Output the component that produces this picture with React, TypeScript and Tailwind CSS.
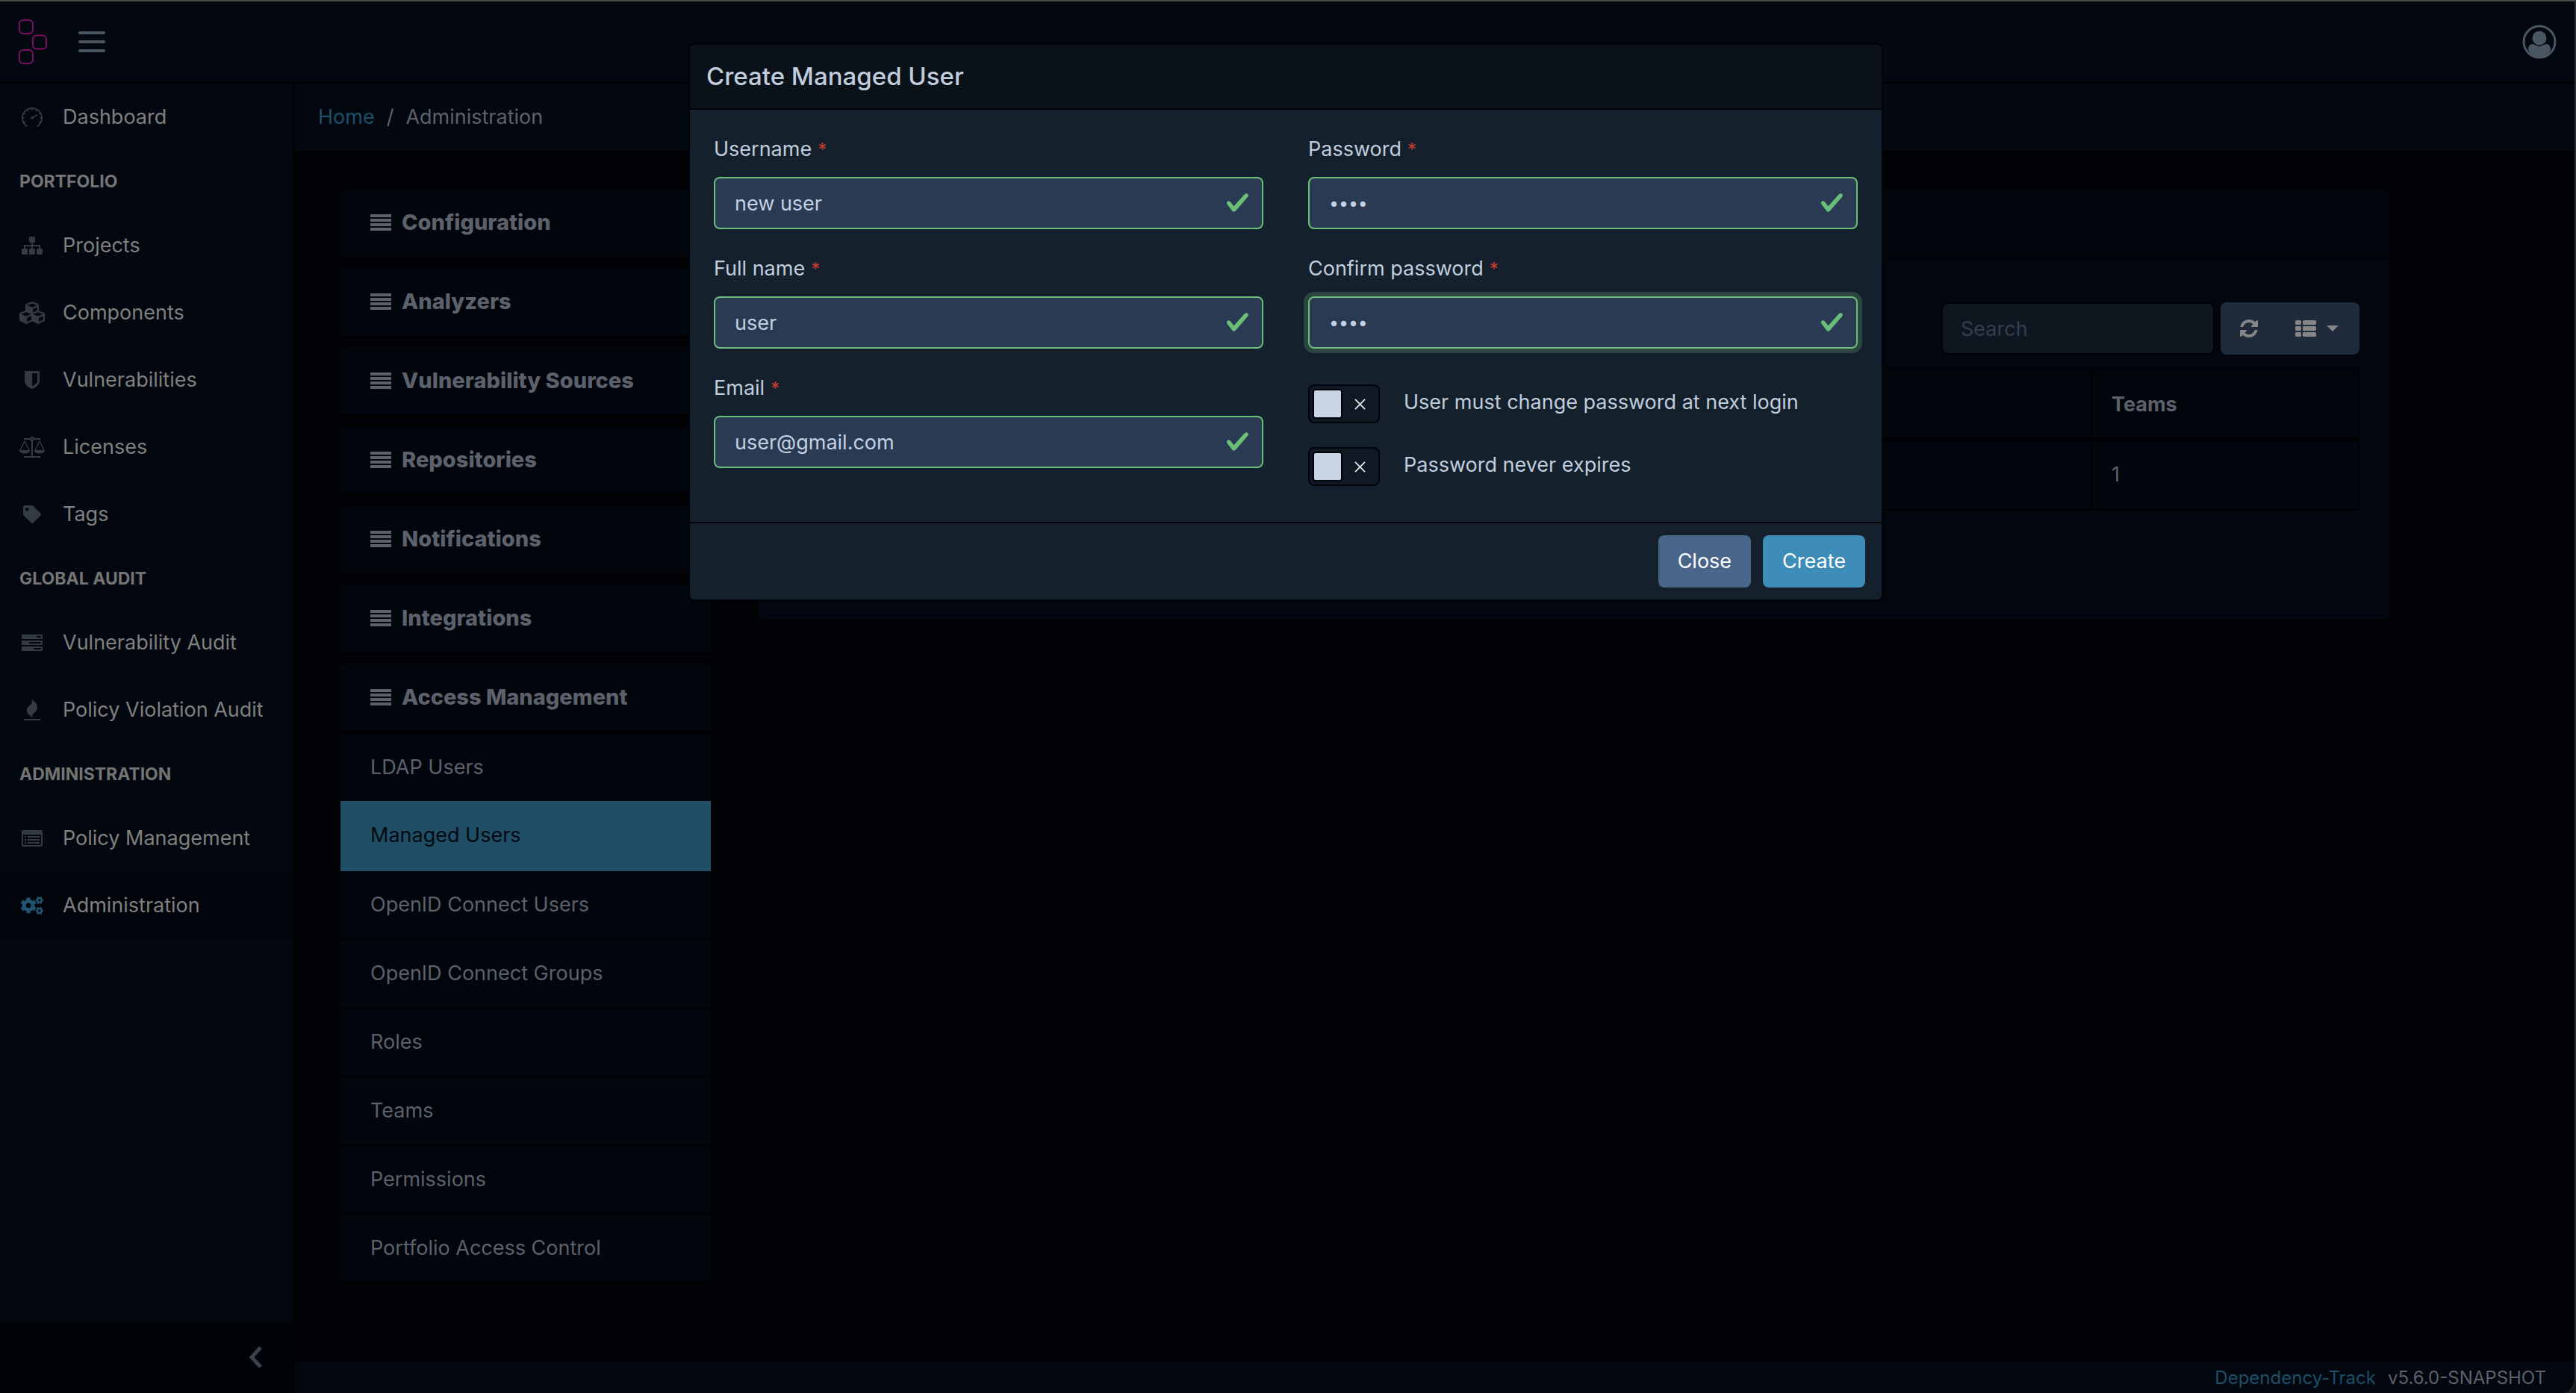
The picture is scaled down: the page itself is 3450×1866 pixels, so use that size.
import React from 'react';
import clsx from 'clsx';
import { FaCogs, FaCubes, FaTag } from 'react-icons/fa';
import { SlSpeedometer } from 'react-icons/sl';

const LogoIcon = () => (
  <svg width="40" height="62" viewBox="0 0 40 62" fill="none" stroke="#7d0f63" strokeWidth="2">
    <rect x="2" y="2" width="18" height="18" rx="5" />
    <rect x="20" y="22.500" width="18" height="18" rx="5" />
    <rect x="2" y="42" width="18" height="18" rx="5" />
  </svg>
);

const MenuIcon = () => (
  <svg width="38" height="30" viewBox="0 0 38 30" stroke="#4b5663" strokeWidth="4" strokeLinecap="round">
    <path d="M3 3h32M3 15h32M3 27h32" />
  </svg>
);

const AvatarIcon = () => (
  <svg width="46" height="46" viewBox="0 0 46 46" fill="#4b5663">
    <circle cx="23" cy="23" r="21" fill="none" stroke="#4b5663" strokeWidth="3" />
    <circle cx="23" cy="18" r="9.500" />
    <path d="M8 34c0-5 2-8 6-8 3 0 5 3 9 3s6-3 9-3c4 0 6 3 6 8-3 6-9 10-15 10S11 40 8 34z" />
  </svg>
);

const SitemapIcon = () => (
  <svg width="28" height="24" viewBox="0 0 28 24" fill="currentColor">
    <rect x="10" width="8" height="8" rx="1.500" />
    <rect y="16" width="8" height="8" rx="1.500" />
    <rect x="10" y="16" width="8" height="8" rx="1.500" />
    <rect x="20" y="16" width="8" height="8" rx="1.500" />
    <path d="M14 7v10M4 17v-5h20v5" fill="none" stroke="currentColor" strokeWidth="2" />
  </svg>
);

const ShieldIcon = () => (
  <svg width="20" height="24" viewBox="0 0 20 24" fill="currentColor">
    <path fillRule="evenodd" d="M1 0h18a1 1 0 0 1 1 1v12c0 5-5 9-10 11C5 22 0 18 0 13V1a1 1 0 0 1 1-1zm9 3v17.500c4-2 7-4.500 7-7.500V3z" />
  </svg>
);

const BalanceIcon = () => (
  <svg width="34" height="28" viewBox="0 0 34 28" fill="none" stroke="currentColor">
    <path d="M6 3h9M19 3h9M17 5v22M6 27h22" strokeWidth="2" />
    <circle cx="17" cy="3" r="2" strokeWidth="2" />
    <path d="M1 18l6-12 6 12M21 18l6-12 6 12" strokeWidth="1.300" />
    <path d="M0 18h14c0 3-3 4.500-7 4.500S0 21 0 18zM20 18h14c0 3-3 4.500-7 4.500S20 21 20 18z" fill="currentColor" stroke="none" />
  </svg>
);

const TasksIcon = () => (
  <svg width="28" height="22" viewBox="0 0 28 22" fill="currentColor">
    <path fillRule="evenodd" d="M1 0h26a1 1 0 0 1 1 1v4a1 1 0 0 1-1 1H1a1 1 0 0 1-1-1V1a1 1 0 0 1 1-1zm19 2v2h6V2zM1 8h26a1 1 0 0 1 1 1v4a1 1 0 0 1-1 1H1a1 1 0 0 1-1-1V9a1 1 0 0 1 1-1zm9 2v2h16v-2zM1 16h26a1 1 0 0 1 1 1v4a1 1 0 0 1-1 1H1a1 1 0 0 1-1-1v-4a1 1 0 0 1 1-1zm15 2v2h10v-2z" />
  </svg>
);

const FireIcon = () => (
  <svg width="24" height="28" viewBox="0 0 24 28" fill="currentColor">
    <path d="M11 0c6 3 8 7 8 11 0 5-4 6-6 9-1 1-1 2 0 4-5-2-8-6-8-10C5 9 11 8 12 4c0-1 0-2-1-4z" />
    <path d="M1 26h22v2H1z" />
  </svg>
);

const ListAltIcon = () => (
  <svg width="28" height="22" viewBox="0 0 28 22" fill="currentColor">
    <path fillRule="evenodd" d="M2 0h24a2 2 0 0 1 2 2v18a2 2 0 0 1-2 2H2a2 2 0 0 1-2-2V2a2 2 0 0 1 2-2zm0 6v13a1 1 0 0 0 1 1h22a1 1 0 0 0 1-1V6z" />
    <path d="M4 8h2v2H4zM8 8h16v2H8zM4 12h2v2H4zM8 12h16v2H8zM4 16h2v2H4zM8 16h16v2H8z" />
  </svg>
);

const BarsIcon = () => (
  <svg width="28" height="22" viewBox="0 0 28 22" fill="currentColor">
    <path d="M0 0h28v4H0zM0 6h28v4H0zM0 12h28v4H0zM0 18h28v4H0z" />
  </svg>
);

const RefreshIcon = () => (
  <svg width="24" height="28" viewBox="0 0 1536 1792" fill="currentColor">
    <path d="M1511 1056q0 5-1 7-64 268-268 434.500t-478 166.500q-146 0-282.500-55t-243.500-157l-129 129q-19 19-45 19t-45-19-19-45v-448q0-26 19-45t45-19h448q26 0 45 19t19 45-19 45l-137 137q71 66 161 102t187 36q134 0 250-65t186-179q11-17 53-117 8-23 30-23h192q13 0 22.500 9.500t9.500 22.500zM1536 256v448q0 26-19 45t-45 19h-448q-26 0-45-19t-19-45 19-45l138-138q-148-137-349-137-134 0-250 65t-186 179q-11 17-53 117-8 23-30 23h-199q-13 0-22.500-9.500t-9.500-22.500v-7q65-268 270-434.500t480-166.500q146 0 284 55.500t245 156.500l130-129q19-19 45-19t45 19 19 45z" />
  </svg>
);

const ColumnsIcon = () => (
  <svg width="28" height="22" viewBox="0 0 28 22" fill="currentColor">
    <rect width="8" height="6" rx="1.500" />
    <rect x="10" width="18" height="6" rx="1.500" />
    <rect y="8" width="8" height="6" rx="1.500" />
    <rect x="10" y="8" width="18" height="6" rx="1.500" />
    <rect y="16" width="8" height="6" rx="1.500" />
    <rect x="10" y="16" width="18" height="6" rx="1.500" />
  </svg>
);

interface NavItem {
  label: string;
  icon: React.ReactNode;
  active?: boolean;
}

interface NavGroup {
  title?: string;
  items: NavItem[];
}

const navGroups: NavGroup[] = [
  { items: [{ label: 'Dashboard', icon: <SlSpeedometer size={28} /> }] },
  {
    title: 'PORTFOLIO',
    items: [
      { label: 'Projects', icon: <SitemapIcon /> },
      { label: 'Components', icon: <FaCubes size={34} /> },
      { label: 'Vulnerabilities', icon: <ShieldIcon /> },
      { label: 'Licenses', icon: <BalanceIcon /> },
      { label: 'Tags', icon: <FaTag size={24} /> },
    ],
  },
  {
    title: 'GLOBAL AUDIT',
    items: [
      { label: 'Vulnerability Audit', icon: <TasksIcon /> },
      { label: 'Policy Violation Audit', icon: <FireIcon /> },
    ],
  },
  {
    title: 'ADMINISTRATION',
    items: [
      { label: 'Policy Management', icon: <ListAltIcon /> },
      { label: 'Administration', icon: <FaCogs size={30} />, active: true },
    ],
  },
];

const sections = [
  'Configuration',
  'Analyzers',
  'Vulnerability Sources',
  'Repositories',
  'Notifications',
  'Integrations',
];

const accessItems = [
  'LDAP Users',
  'Managed Users',
  'OpenID Connect Users',
  'OpenID Connect Groups',
  'Roles',
  'Teams',
  'Permissions',
  'Portfolio Access Control',
];

const Sidebar = () => (
  <aside className="flex w-[394px] shrink-0 flex-col border-r-2 border-black bg-[#03070f]">
    <nav className="flex-1">
      {navGroups.map((group, index) => (
        <div key={index}>
          {group.title && (
            <h2 className="flex h-[82px] items-center px-[26px] text-[23px] font-bold text-[#747474]">{group.title}</h2>
          )}
          {group.items.map((item) => (
            <a
              key={item.label}
              href="#"
              className={clsx(
                'flex h-[90px] items-center gap-[26px] px-7 whitespace-nowrap text-[#80807e]',
                item.active && 'bg-[#01040b]'
              )}
            >
              <span
                className={clsx(
                  'flex w-[30px] shrink-0 justify-center [&>svg]:shrink-0',
                  item.active ? 'text-[#1f5571]' : 'text-[#343a43]'
                )}
              >
                {item.icon}
              </span>
              {item.label}
            </a>
          ))}
        </div>
      ))}
    </nav>
    <button type="button" aria-label="Minimize sidebar" className="flex h-24 items-center justify-end bg-[#000307] px-10">
      <svg width="20" height="30" viewBox="0 0 20 30" fill="none" stroke="#3c424c" strokeWidth="5">
        <path d="M17 2L5 15l12 13" />
      </svg>
    </button>
  </aside>
);

const SectionHeader: React.FC<{ label: string }> = ({ label }) => (
  <button
    type="button"
    className="flex h-24 w-full items-center gap-3.5 rounded-t-lg border-2 border-b-4 border-black bg-[#01050c] px-10 text-[29px] font-extrabold text-[#5c616b]"
  >
    <BarsIcon />
    {label}
  </button>
);

const AdminMenu = () => (
  <div className="flex w-[500px] shrink-0 flex-col gap-2.5">
    {sections.map((label) => (
      <SectionHeader key={label} label={label} />
    ))}
    <div>
      <SectionHeader label="Access Management" />
      <ul className="border-x-2 border-black">
        {accessItems.map((label) => {
          const active = label === 'Managed Users';
          return (
            <li key={label} className={clsx(active && '-mt-0.5')}>
              <a
                href="#"
                className={clsx(
                  'flex items-center border-b-2 px-10',
                  active
                    ? 'h-[94px] border-[#1f4e66] bg-[#1f4e66] text-[#010910]'
                    : 'h-[92px] border-black bg-[#01050c] text-[#5c616b]'
                )}
              >
                {label}
              </a>
            </li>
          );
        })}
      </ul>
    </div>
  </div>
);

const UsersCard = () => (
  <section className="min-w-0 flex-1 self-start rounded-lg border-2 border-black bg-[#02060e]">
    <div className="h-[92px] rounded-t-lg border-b-2 border-black bg-[#01050c]" />
    <div className="px-10 pt-[60px] pb-[146px]">
      <div className="flex justify-end gap-2">
        <input
          type="search"
          aria-label="Search"
          placeholder="Search"
          className="h-[70px] w-[366px] rounded-lg border-2 border-black bg-[#0f161f] px-6 text-[#5c616b] placeholder:text-[#323e4f]"
        />
        <div className="flex h-[70px] rounded-lg bg-[#1f2b3b] text-[#868686]">
          <button type="button" aria-label="Refresh" className="flex items-center px-[26px]">
            <RefreshIcon />
          </button>
          <button type="button" aria-label="Columns" className="flex items-center gap-3.5 pr-7 pl-6">
            <ColumnsIcon />
            <svg width="16" height="8" viewBox="0 0 16 8" fill="currentColor">
              <path d="M0 0h16L8 8z" />
            </svg>
          </button>
        </div>
      </div>
      <table className="mt-5 w-full border-collapse bg-[#01050c] text-left text-[#5c616b]">
        <thead>
          <tr className="h-[93px]">
            <th className="border-2 border-b-4 border-black" />
            <th className="w-[358px] border-2 border-b-4 border-black px-[26px] font-bold">Teams</th>
          </tr>
        </thead>
        <tbody>
          <tr className="h-[94px]">
            <td className="border-2 border-black" />
            <td className="border-2 border-black px-[26px]">1</td>
          </tr>
        </tbody>
      </table>
    </div>
  </section>
);

interface FieldProps {
  id: string;
  label: string;
  value: string;
  type?: string;
  focused?: boolean;
}

const Field: React.FC<FieldProps> = ({ id, label, value, type = 'text', focused }) => (
  <div>
    <label htmlFor={id} className="mb-[15px] flex h-[43px] items-center gap-2">
      {label}
      <span className="text-[24px] text-[#cf3a2f]">*</span>
    </label>
    <div className="relative">
      <input
        id={id}
        type={type}
        defaultValue={value}
        className={clsx(
          'h-[70px] w-full rounded-lg border-2 border-[#6abf78] bg-[#2a3a52] px-[26px] text-[#c3d1e2] outline-none',
          type === 'password' && 'text-[23px]',
          focused && 'ring-6 ring-[#2a463e]'
        )}
      />
      <svg className="pointer-events-none absolute top-[18px] right-[18px]" width="33" height="33" viewBox="0 0 8 8" fill="#6abf78">
        <path d="M2.3 6.73L.6 4.53c-.4-1.04.46-1.4 1.1-.8l1.1 1.4 3.4-3.8c.6-.63 1.6-.27 1.2.7l-4 4.6c-.43.5-.8.4-1.1.1z" />
      </svg>
    </div>
  </div>
);

const Toggle: React.FC<{ id: string; label: string }> = ({ id, label }) => (
  <div className="flex items-center gap-8">
    <div className="relative flex h-[52px] w-24 items-center rounded-lg border-2 border-[#000307] bg-[#101923] px-1">
      <input id={id} type="checkbox" className="absolute inset-0 appearance-none" />
      <span className="size-10 rounded-sm border-2 border-[#000307] bg-[#c8d6e6]" />
      <svg className="ml-4" width="15" height="15" viewBox="0 0 16 16" stroke="#dfe3e6" strokeWidth="2">
        <path d="M1 1l14 14M15 1L1 15" />
      </svg>
    </div>
    <label htmlFor={id} className="pb-1">{label}</label>
  </div>
);

const CreateUserModal = () => (
  <div className="fixed inset-0 flex items-start justify-center pt-[58px] pr-1.5">
    <div
      role="dialog"
      aria-labelledby="modal-title"
      className="w-full max-w-[1600px] rounded-lg border-2 border-[#000307] bg-[#15202d] text-[#c0cddd]"
    >
      <div className="flex h-[87px] items-center rounded-t-lg border-b-2 border-[#000307] bg-[#0a1119] px-[22px]">
        <h1 id="modal-title" className="text-[33px] font-medium">Create Managed User</h1>
      </div>
      <div className="grid grid-cols-2 gap-x-[60px] px-8 pt-8 pb-12">
        <div className="flex flex-col gap-8">
          <Field id="username" label="Username" value="new user" />
          <Field id="fullname" label="Full name" value="user" />
          <Field id="email" label="Email" value="user@gmail.com" />
        </div>
        <div className="flex flex-col gap-8">
          <Field id="password" label="Password" value="user" type="password" />
          <Field id="confirm" label="Confirm password" value="user" type="password" focused />
          <div className="flex flex-col gap-8 pt-4">
            <Toggle id="force-change" label="User must change password at next login" />
            <Toggle id="never-expires" label="Password never expires" />
          </div>
        </div>
      </div>
      <div className="flex justify-end gap-4 border-t-2 border-[#000307] px-[22px] py-4 text-white">
        <button type="button" className="h-[70px] rounded-lg bg-[#4a658a] px-[26px]">Close</button>
        <button type="button" className="h-[70px] rounded-lg bg-[#3d8db8] px-[26px]">Create</button>
      </div>
    </div>
  </div>
);

export default function App() {
  return (
    <div className="min-h-screen bg-[#1a1d1f] font-[Inter,sans-serif] text-[27px]">
      <div className="flex min-h-screen flex-col overflow-hidden rounded-br-[20px] border-t-2 border-r-2 border-t-[#4a4b48] border-r-[#2b2f33] bg-[#000205]">
        <header className="flex h-[110px] items-center gap-10 border-b-2 border-black bg-[#03070f] px-6">
          <LogoIcon />
          <button type="button" aria-label="Toggle sidebar">
            <MenuIcon />
          </button>
          <button type="button" aria-label="Profile" className="ml-auto">
            <AvatarIcon />
          </button>
        </header>
        <div className="flex flex-1">
          <Sidebar />
          <div className="flex min-w-0 flex-1 flex-col">
            <nav className="flex h-[92px] items-center gap-4 border-b-2 border-black bg-[#03070f] px-8 text-[#5c616b]">
              <a href="#" className="text-[#1d4f68]">Home</a>
              <span>/</span>
              <span>Administration</span>
            </nav>
            <main className="flex flex-1 gap-[60px] pt-[47px] pr-[246px] pl-[60px]">
              <AdminMenu />
              <UsersCard />
            </main>
            <footer className="flex h-11 items-center justify-end gap-4 border-t-2 border-black bg-[#03070f] px-[38px] pt-0.5 text-[24px] text-[#5c616b]">
              <a href="#" className="text-[#1d4f68]">Dependency-Track</a>
              <span>v5.6.0-SNAPSHOT</span>
            </footer>
          </div>
        </div>
      </div>
      <CreateUserModal />
    </div>
  );
}
